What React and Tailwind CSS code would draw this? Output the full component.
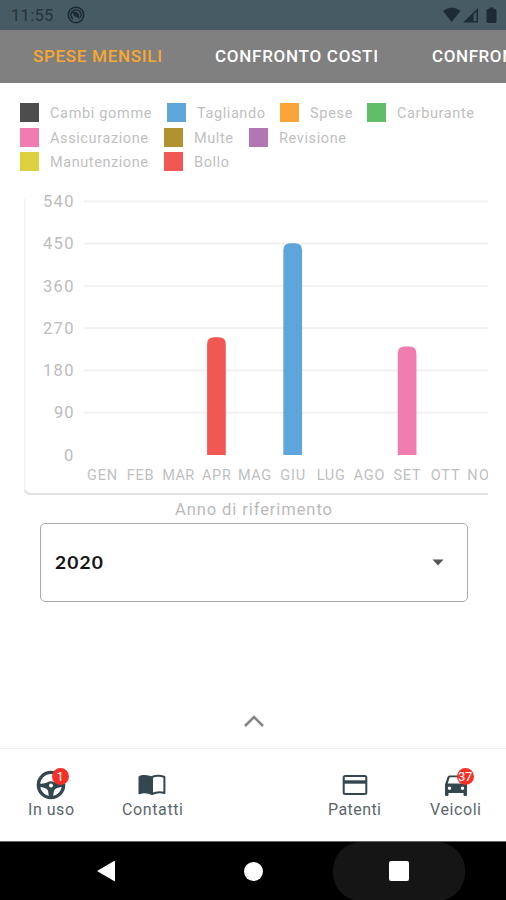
const LEGEND = [
  [
    { label: 'Cambi gomme', color: '#4d4d4d', cell: 'w-[146.5px]', width: 101.5 },
    { label: 'Tagliando', color: '#5da5da', cell: 'w-[113px]', width: 68 },
    { label: 'Spese', color: '#faa43a', cell: 'w-[87.5px]', width: 42.5 },
    { label: 'Carburante', color: '#60bd68', cell: 'w-[120px]', width: 77 },
  ],
  [
    { label: 'Assicurazione', color: '#f17cb0', cell: 'w-[144px]', width: 98 },
    { label: 'Multe', color: '#b2912f', cell: 'w-[85px]', width: 39 },
    { label: 'Revisione', color: '#b276b2', cell: 'w-[120px]', width: 67 },
  ],
  [
    { label: 'Manutenzione', color: '#decf3f', cell: 'w-[144px]', width: 98 },
    { label: 'Bollo', color: '#f15854', cell: 'w-[85px]', width: 35 },
  ],
]

const MONTHS = ['GEN', 'FEB', 'MAR', 'APR', 'MAG', 'GIU', 'LUG', 'AGO', 'SET', 'OTT', 'NOV']
const MONTH_WIDTHS = [30, 27, 32, 29, 33, 25, 28, 31, 27, 29, 32]
const TICKS = [540, 450, 360, 270, 180, 90, 0]

const BARS = [
  { month: 3, value: 250, color: '#f15854' },
  { month: 5, value: 450, color: '#5da5da' },
  { month: 8, value: 230, color: '#f17cb0' },
]

const yFor = (value) => 260 - value * 0.4694
const xFor = (month) => 78 + month * 38.13

function Label({ children, width, height = 20, size, color, weight = 400 }) {
  return (
    <svg width={width} height={height} className="block shrink-0 overflow-visible">
      <text x="0" y={height - 5} textLength={width} fontSize={size} fontWeight={weight} fill={color}>
        {children}
      </text>
    </svg>
  )
}

function StatusBar() {
  return (
    <div className="flex h-[30px] shrink-0 items-center bg-[#475b65] pl-[11px] pr-[8px]">
      <span className="w-[56px] pt-[2px] text-[16.5px] leading-[30px] tracking-[0.3px] text-[#25333c]">11:55</span>
      <svg width="18" height="18" viewBox="0 0 18 18" className="block">
        <circle cx="9" cy="9" r="7.7" fill="none" stroke="#1d2b34" strokeWidth="1.6" />
        <path d="M6 13 A5 5 0 1 1 13.200 11.800" fill="none" stroke="#1d2b34" strokeWidth="1.6" />
        <path d="M5 6 Q9 4.500 12 8 L12.500 13.500 Q10 10.500 7.500 10.500 Z" fill="#1d2b34" />
      </svg>
      <svg width="56" height="18" viewBox="0 0 56 18" className="ml-auto block" fill="#1d2b34">
        <path d="M1 5 Q10 -2 18.500 5 L9.700 16 Z" />
        <path fillRule="evenodd" d="M21 16.500 L36 2 V16.500 Z M31.500 8.500 V15 H34.500 V5.500 Z" />
        <path d="M46 3 H47.500 V1.500 H51.500 V3 H53 Q54.500 3 54.500 4.500 V15.500 Q54.500 17 53 17 H46 Q44.500 17 44.500 15.500 V4.500 Q44.500 3 46 3 Z" />
      </svg>
    </div>
  )
}

function Tabs() {
  return (
    <div className="flex h-[53px] shrink-0 items-center overflow-hidden bg-[#808080] pb-[2px] pl-[33px]">
      <div className="w-[182px] shrink-0">
        <Label width={129} height={23} size={17} weight={500} color="#f9a72f">SPESE MENSILI</Label>
      </div>
      <div className="w-[216.5px] shrink-0">
        <Label width={163} height={23} size={17} weight={500} color="#ffffff">CONFRONTO COSTI</Label>
      </div>
      <Label width={105} height={23} size={17} weight={500} color="#ffffff">CONFRONTO</Label>
    </div>
  )
}

function Legend() {
  return (
    <div className="flex h-[112px] shrink-0 flex-col pl-5 pt-[20px]">
      {LEGEND.map((row, i) => (
        <div key={i} className="flex h-[24.6px] shrink-0 items-start">
          {row.map((item) => (
            <div key={item.label} className={`flex shrink-0 items-start ${item.cell}`}>
              <span className="mr-[11px] h-[19px] w-[19px] shrink-0" style={{ backgroundColor: item.color }} />
              <Label width={item.width} height={20} size={14.5} color="#bfbfbf">{item.label}</Label>
            </div>
          ))}
        </div>
      ))}
    </div>
  )
}

function Chart() {
  return (
    <svg width="464" height="302" viewBox="0 0 464 302" className="ml-6 block shrink-0">
      <path d="M0.500 4 V294 Q0.500 299 6 299" fill="none" stroke="#f0f0f0" strokeWidth="1.5" />
      <path d="M1 295 Q2 299 7 299 H464" fill="none" stroke="#e2e2e2" strokeWidth="2" />
      {TICKS.map((tick) => (
        <g key={tick}>
          {tick > 0 && <path d={`M60 ${yFor(tick) - 0.2} H464`} stroke="#f0f0f0" strokeWidth="1.700" />}
          <text
            x={tick > 90 ? 19 : tick ? 30 : 40}
            y={yFor(tick) + 5.6}
            textLength={tick > 90 ? 30.5 : tick ? 19.5 : 9}
            fontSize="16.500"
            fill="#bcbcbc"
          >
            {tick}
          </text>
        </g>
      ))}
      {BARS.map(({ month, value, color }) => {
        const x = xFor(month) - 9.3
        const y = yFor(value) - 0.5
        return (
          <path
            key={month}
            d={`M${x} 260 V${y + 7} Q${x} ${y} ${x + 7} ${y} H${x + 11.7} Q${x + 18.7} ${y} ${x + 18.7} ${y + 7} V260 Z`}
            fill={color}
          />
        )
      })}
      {MONTHS.map((month, i) => (
        <text
          key={month}
          x={xFor(i) - MONTH_WIDTHS[i] / 2}
          y="285"
          textLength={MONTH_WIDTHS[i]}
          fontSize="14.500"
          fill="#bfbfbf"
        >
          {month}
        </text>
      ))}
    </svg>
  )
}

function YearSelect() {
  return (
    <div className="flex shrink-0 flex-col items-center">
      <div className="flex h-[26px] w-full items-center pl-[175px]">
        <Label width={157} height={19} size={16.5} color="#bababa">Anno di riferimento</Label>
      </div>
      <div className="ml-px flex h-[79px] w-[428px] items-center justify-between rounded-[5px] border-[1.5px] border-[#aaaaaa] pl-[14px] pr-[23px]">
        <svg width="47" height="20" className="block overflow-visible font-['Lato']">
          <text x="0" y="15.500" fontSize="17" fontWeight="700" letterSpacing="1" transform="scale(1.13 1)" fill="#161616">2020</text>
        </svg>
        <svg width="12" height="7" viewBox="0 0 12 7" className="block" fill="#555555">
          <path d="M0.500 0.500 H11.500 L6 6.500 Z" />
        </svg>
      </div>
    </div>
  )
}

function SteeringWheel() {
  return (
    <svg width="30" height="30" viewBox="0 0 30 30" className="block" fill="none" stroke="#34474f">
      <circle cx="15" cy="15" r="12.6" strokeWidth="3.400" />
      <path d="M3 13.500 Q8 14 11 12.500 Q15 10 19 12.500 Q22 14 27 13.500 V17 Q20 17 18 20.500 L17 27 H13 L12 20.500 Q10 17 3 17 Z" fill="#34474f" stroke="none" />
      <circle cx="15" cy="15.500" r="2" fill="#ffffff" stroke="none" />
    </svg>
  )
}

function OpenBook() {
  return (
    <svg width="28" height="22" viewBox="0 0 28 22" className="block">
      <path d="M0.500 3 Q1 1.500 5 1 Q10 0.500 14 2.500 V21 Q10 19 6 19.200 Q3 19.500 1.500 20.300 Q0.500 20.500 0.500 19.500 Z" fill="#34474f" />
      <path d="M14 3 Q20 0.500 26.400 3 V19 Q20 17 14 20 Z" fill="none" stroke="#34474f" strokeWidth="2" strokeLinejoin="round" />
    </svg>
  )
}

function LicenseCard() {
  return (
    <svg width="26" height="20" viewBox="0 0 26 20" className="block" fill="none" stroke="#34474f">
      <rect x="1.700" y="1" width="22.600" height="18" rx="1.500" strokeWidth="2" />
      <path d="M1.500 7 H24.500" strokeWidth="3.400" />
    </svg>
  )
}

function Car() {
  return (
    <svg width="24" height="24" viewBox="0 0 24 24" className="block" fill="#34474f">
      <path
        fillRule="evenodd"
        d="M5.500 2.500 H18.500 Q20 2.500 20.500 4 L23 11.500 V22 Q23 23 22 23 H20.500 Q19.500 23 19.500 22 V20 H4.500 V22 Q4.500 23 3.500 23 H2 Q1 23 1 22 V11.500 L3.500 4 Q4 2.500 5.500 2.500 Z M5.700 4.300 L3.800 10.500 H20.200 L18.300 4.300 Z M5.500 13.500 A1.700 1.700 0 1 0 5.500 16.900 A1.700 1.700 0 1 0 5.500 13.500 Z M18.500 13.500 A1.700 1.700 0 1 0 18.500 16.900 A1.700 1.700 0 1 0 18.500 13.500 Z"
      />
    </svg>
  )
}

function Badge({ children }) {
  return (
    <span className="absolute -right-[3px] -top-[2px] flex h-[17px] w-[17px] items-center justify-center rounded-full bg-[#f53026] text-[13px] leading-none tracking-[-0.3px] text-white">
      {children}
    </span>
  )
}

function NavItem({ icon, label, width, badge, cell }) {
  return (
    <div className={`flex shrink-0 flex-col items-center ${cell}`}>
      <div className="relative flex h-[30px] w-[30px] items-center justify-center">
        {icon}
        {badge && <Badge>{badge}</Badge>}
      </div>
      <Label width={width} height={20} size={16} color="#5a676d">{label}</Label>
    </div>
  )
}

function BottomNav() {
  return (
    <div className="flex h-[93px] shrink-0 border-t border-[#f2f2f2] pt-[21px]">
      <NavItem cell="w-[101px]" label="In uso" width={46} badge="1" icon={<SteeringWheel />} />
      <NavItem cell="w-[102px]" label="Contatti" width={61} icon={<OpenBook />} />
      <div className="w-[101px] shrink-0" />
      <NavItem cell="w-[101px]" label="Patenti" width={53} icon={<LicenseCard />} />
      <NavItem cell="w-[101px]" label="Veicoli" width={51} badge="37" icon={<Car />} />
    </div>
  )
}

function SystemNav() {
  return (
    <div className="flex h-[59px] shrink-0 items-center overflow-hidden border-t border-[#666666] bg-black pl-[40px]">
      <div className="flex w-[131px] shrink-0 items-center justify-center">
        <svg width="20" height="22" viewBox="0 0 20 22" fill="white">
          <path d="M1 11 L18 1 Q19 0.500 19 1.500 V20.500 Q19 21.500 18 21 Z" />
        </svg>
      </div>
      <div className="flex w-[162px] shrink-0 items-center justify-center pl-[3px]">
        <span className="h-[19px] w-[19px] rounded-full bg-white" />
      </div>
      <div className="flex h-[59px] w-[132px] shrink-0 items-center justify-center rounded-[28px] bg-[#151515]">
        <span className="h-[20px] w-[20px] rounded-[2px] bg-white" />
      </div>
    </div>
  )
}

export default function App() {
  return (
    <div className="flex h-[900px] w-[506px] flex-col overflow-hidden bg-white font-['Roboto',sans-serif]">
      <StatusBar />
      <Tabs />
      <Legend />
      <Chart />
      <YearSelect />
      <div className="flex flex-1 items-end justify-center pb-[21px] pl-px">
        <svg width="20" height="12" viewBox="0 0 20 12" fill="none" stroke="#858585" strokeWidth="2.600">
          <path d="M1 11 L10 2 L19 11" />
        </svg>
      </div>
      <BottomNav />
      <SystemNav />
    </div>
  )
}
